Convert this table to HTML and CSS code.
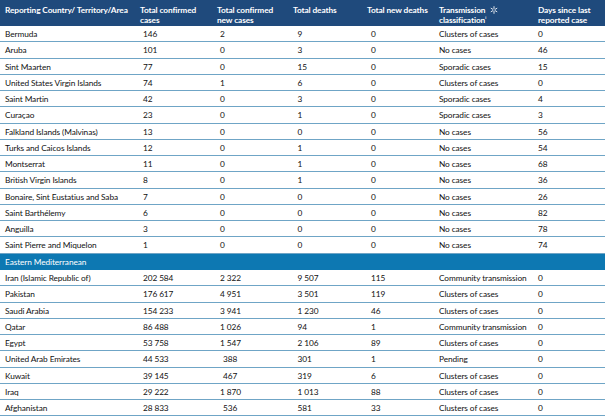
FILE: index.html
```html
<!DOCTYPE html>
<html>
<head>
<meta charset="utf-8">
<link rel="stylesheet" href="styles.css">
</head>
<body>
<div class="tbl">
  <div class="row head">
    <div class="c">Reporting Country/ Territory/Area</div>
    <div class="c">Total confirmed<br>cases</div>
    <div class="c">Total confirmed<br>new cases</div>
    <div class="c">Total deaths</div>
    <div class="c">Total new deaths</div>
    <div class="c">Transmission <svg class="ast" viewBox="0 0 10 10" width="8" height="8"><g stroke="#fff" stroke-width="1.1" stroke-linecap="round"><line x1="5" y1="0.8" x2="5" y2="9.2"/><line x1="1.4" y1="2.9" x2="8.6" y2="7.1"/><line x1="1.4" y1="7.1" x2="8.6" y2="2.9"/></g><circle cx="5" cy="5" r="1.2" fill="#1f4a7c"/></svg><br>classification<sup>i</sup></div>
    <div class="c">Days since last<br>reported case</div>
  </div>
  <div class="row"><div class="c">Bermuda</div><div class="c">146</div><div class="c">2</div><div class="c">9</div><div class="c">0</div><div class="c">Clusters of cases</div><div class="c">0</div></div>
  <div class="row"><div class="c">Aruba</div><div class="c">101</div><div class="c">0</div><div class="c">3</div><div class="c">0</div><div class="c">No cases</div><div class="c">46</div></div>
  <div class="row"><div class="c">Sint Maarten</div><div class="c">77</div><div class="c">0</div><div class="c">15</div><div class="c">0</div><div class="c">Sporadic cases</div><div class="c">15</div></div>
  <div class="row"><div class="c">United States Virgin Islands</div><div class="c">74</div><div class="c">1</div><div class="c">6</div><div class="c">0</div><div class="c">Clusters of cases</div><div class="c">0</div></div>
  <div class="row"><div class="c">Saint Martin</div><div class="c">42</div><div class="c">0</div><div class="c">3</div><div class="c">0</div><div class="c">Sporadic cases</div><div class="c">4</div></div>
  <div class="row"><div class="c">Curaçao</div><div class="c">23</div><div class="c">0</div><div class="c">1</div><div class="c">0</div><div class="c">Sporadic cases</div><div class="c">3</div></div>
  <div class="row"><div class="c">Falkland Islands (Malvinas)</div><div class="c">13</div><div class="c">0</div><div class="c">0</div><div class="c">0</div><div class="c">No cases</div><div class="c">56</div></div>
  <div class="row"><div class="c">Turks and Caicos Islands</div><div class="c">12</div><div class="c">0</div><div class="c">1</div><div class="c">0</div><div class="c">No cases</div><div class="c">54</div></div>
  <div class="row"><div class="c">Montserrat</div><div class="c">11</div><div class="c">0</div><div class="c">1</div><div class="c">0</div><div class="c">No cases</div><div class="c">68</div></div>
  <div class="row"><div class="c">British Virgin Islands</div><div class="c">8</div><div class="c">0</div><div class="c">1</div><div class="c">0</div><div class="c">No cases</div><div class="c">36</div></div>
  <div class="row"><div class="c">Bonaire, Sint Eustatius and Saba</div><div class="c">7</div><div class="c">0</div><div class="c">0</div><div class="c">0</div><div class="c">No cases</div><div class="c">26</div></div>
  <div class="row"><div class="c">Saint Barthélemy</div><div class="c">6</div><div class="c">0</div><div class="c">0</div><div class="c">0</div><div class="c">No cases</div><div class="c">82</div></div>
  <div class="row"><div class="c">Anguilla</div><div class="c">3</div><div class="c">0</div><div class="c">0</div><div class="c">0</div><div class="c">No cases</div><div class="c">78</div></div>
  <div class="row"><div class="c">Saint Pierre and Miquelon</div><div class="c">1</div><div class="c">0</div><div class="c">0</div><div class="c">0</div><div class="c">No cases</div><div class="c">74</div></div>
  <div class="row region"><div class="c">Eastern Mediterranean</div></div>
  <div class="row"><div class="c">Iran (Islamic Republic of)</div><div class="c">202 584</div><div class="c">2 322</div><div class="c">9 507</div><div class="c">115</div><div class="c">Community transmission</div><div class="c">0</div></div>
  <div class="row"><div class="c">Pakistan</div><div class="c">176 617</div><div class="c">4 951</div><div class="c">3 501</div><div class="c">119</div><div class="c">Clusters of cases</div><div class="c">0</div></div>
  <div class="row"><div class="c">Saudi Arabia</div><div class="c">154 233</div><div class="c">3 941</div><div class="c">1 230</div><div class="c">46</div><div class="c">Clusters of cases</div><div class="c">0</div></div>
  <div class="row"><div class="c">Qatar</div><div class="c">86 488</div><div class="c">1 026</div><div class="c">94</div><div class="c">1</div><div class="c">Community transmission</div><div class="c">0</div></div>
  <div class="row"><div class="c">Egypt</div><div class="c">53 758</div><div class="c">1 547</div><div class="c">2 106</div><div class="c">89</div><div class="c">Clusters of cases</div><div class="c">0</div></div>
  <div class="row"><div class="c">United Arab Emirates</div><div class="c">44 533</div><div class="c ind">388</div><div class="c">301</div><div class="c">1</div><div class="c">Pending</div><div class="c">0</div></div>
  <div class="row"><div class="c">Kuwait</div><div class="c">39 145</div><div class="c ind">467</div><div class="c">319</div><div class="c">6</div><div class="c">Clusters of cases</div><div class="c">0</div></div>
  <div class="row"><div class="c">Iraq</div><div class="c">29 222</div><div class="c">1 870</div><div class="c">1 013</div><div class="c">88</div><div class="c">Clusters of cases</div><div class="c">0</div></div>
  <div class="row"><div class="c">Afghanistan</div><div class="c">28 833</div><div class="c ind">536</div><div class="c">581</div><div class="c">33</div><div class="c">Clusters of cases</div><div class="c">0</div></div>
</div>
</body>
</html>
```

FILE: styles.css
```css
html, body {
  margin: 0;
  padding: 0;
  background: #ffffff;
}

.tbl {
  width: 605px;
  font-family: Lato, "Liberation Sans", sans-serif;
  font-size: 8.3px;
  letter-spacing: -0.1px;
  color: #111111;
}

.row {
  display: grid;
  grid-template-columns: 137px 77px 76px 74px 72px 99px 70px;
  height: 16.25px;
  box-sizing: border-box;
  border-bottom: 1px solid #6fa5c6;
  align-items: center;
}

.row .c {
  white-space: nowrap;
  line-height: 10px;
  padding-top: 1px;
}

.row .c:nth-child(1) { padding-left: 5px; }
.row .c:nth-child(2) { padding-left: 6px; }
.row .c:nth-child(3) { padding-left: 6px; }
.row .c:nth-child(4) { padding-left: 7.5px; }
.row .c:nth-child(5) { padding-left: 7px; }
.row .c:nth-child(6) { padding-left: 3px; }
.row .c:nth-child(7) { padding-left: 3px; }

.row .c.ind { padding-left: 9px; }

.head {
  height: 26px;
  background: #1f4a7c;
  color: #ffffff;
  font-weight: bold;
  border-bottom: none;
  align-items: start;
  padding-top: 5px;
}

.head .c { line-height: 10px; padding-top: 0; }
.head .c:nth-child(n) { padding-left: 3px; }
.head .c:nth-child(1) { padding-left: 5px; }

.head sup {
  font-size: 4px;
  line-height: 0;
  vertical-align: 4px;
}

.ast {
  vertical-align: -1px;
  margin-left: 3px;
}

.region {
  display: block;
  background: #0d78b2;
  color: #ffffff;
  border-bottom: none;
  height: 16.5px;
  padding-top: 3px;
  box-sizing: border-box;
}

.region .c { padding-left: 5px; padding-top: 0; }
```
